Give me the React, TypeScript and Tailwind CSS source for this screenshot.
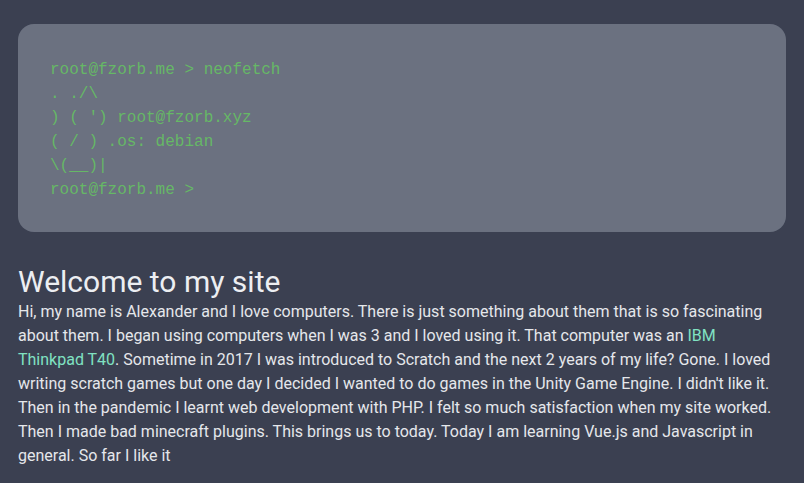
import React from "react";

const terminalLines = [
  "root@fzorb.me > neofetch",
  ". ./\\",
  ") ( ') root@fzorb.xyz",
  "( / ) .os: debian",
  "\\(__)|",
  "root@fzorb.me >",
];

export default function App() {
  return (
    <div className="min-h-screen bg-[#3b4051] px-[18px] pt-6 pb-6 font-['Roboto',sans-serif] text-[#e5e7eb]">
      <div className="rounded-2xl bg-[#6b7180] px-8 pt-[34px] pb-[30px] font-['Liberation_Mono',monospace] text-base leading-6 text-[#66b866]">
        {terminalLines.map((l, i) => (
          <div key={i} className="whitespace-pre">{l}</div>
        ))}
      </div>
      <h1 className="mt-8 text-[30px] leading-9 text-[#eceef2]">Welcome to my site</h1>
      <p className="whitespace-nowrap text-base leading-6">
        Hi, my name is Alexander and I love computers. There is just something about them that is so fascinating
        <br />
        about them. I began using computers when I was 3 and I loved using it. That computer was an{" "}
        <span className="text-[#80e2c2]">
          IBM
          <br />
          Thinkpad T40
        </span>
        . Sometime in 2017 I was introduced to Scratch and the next 2 years of my life? Gone. I loved
        <br />
        writing scratch games but one day I decided I wanted to do games in the Unity Game Engine. I didn't like it.
        <br />
        Then in the pandemic I learnt web development with PHP. I felt so much satisfaction when my site worked.
        <br />
        Then I made bad minecraft plugins. This brings us to today. Today I am learning Vue.js and Javascript in
        <br />
        general. So far I like it
      </p>
    </div>
  );
}
